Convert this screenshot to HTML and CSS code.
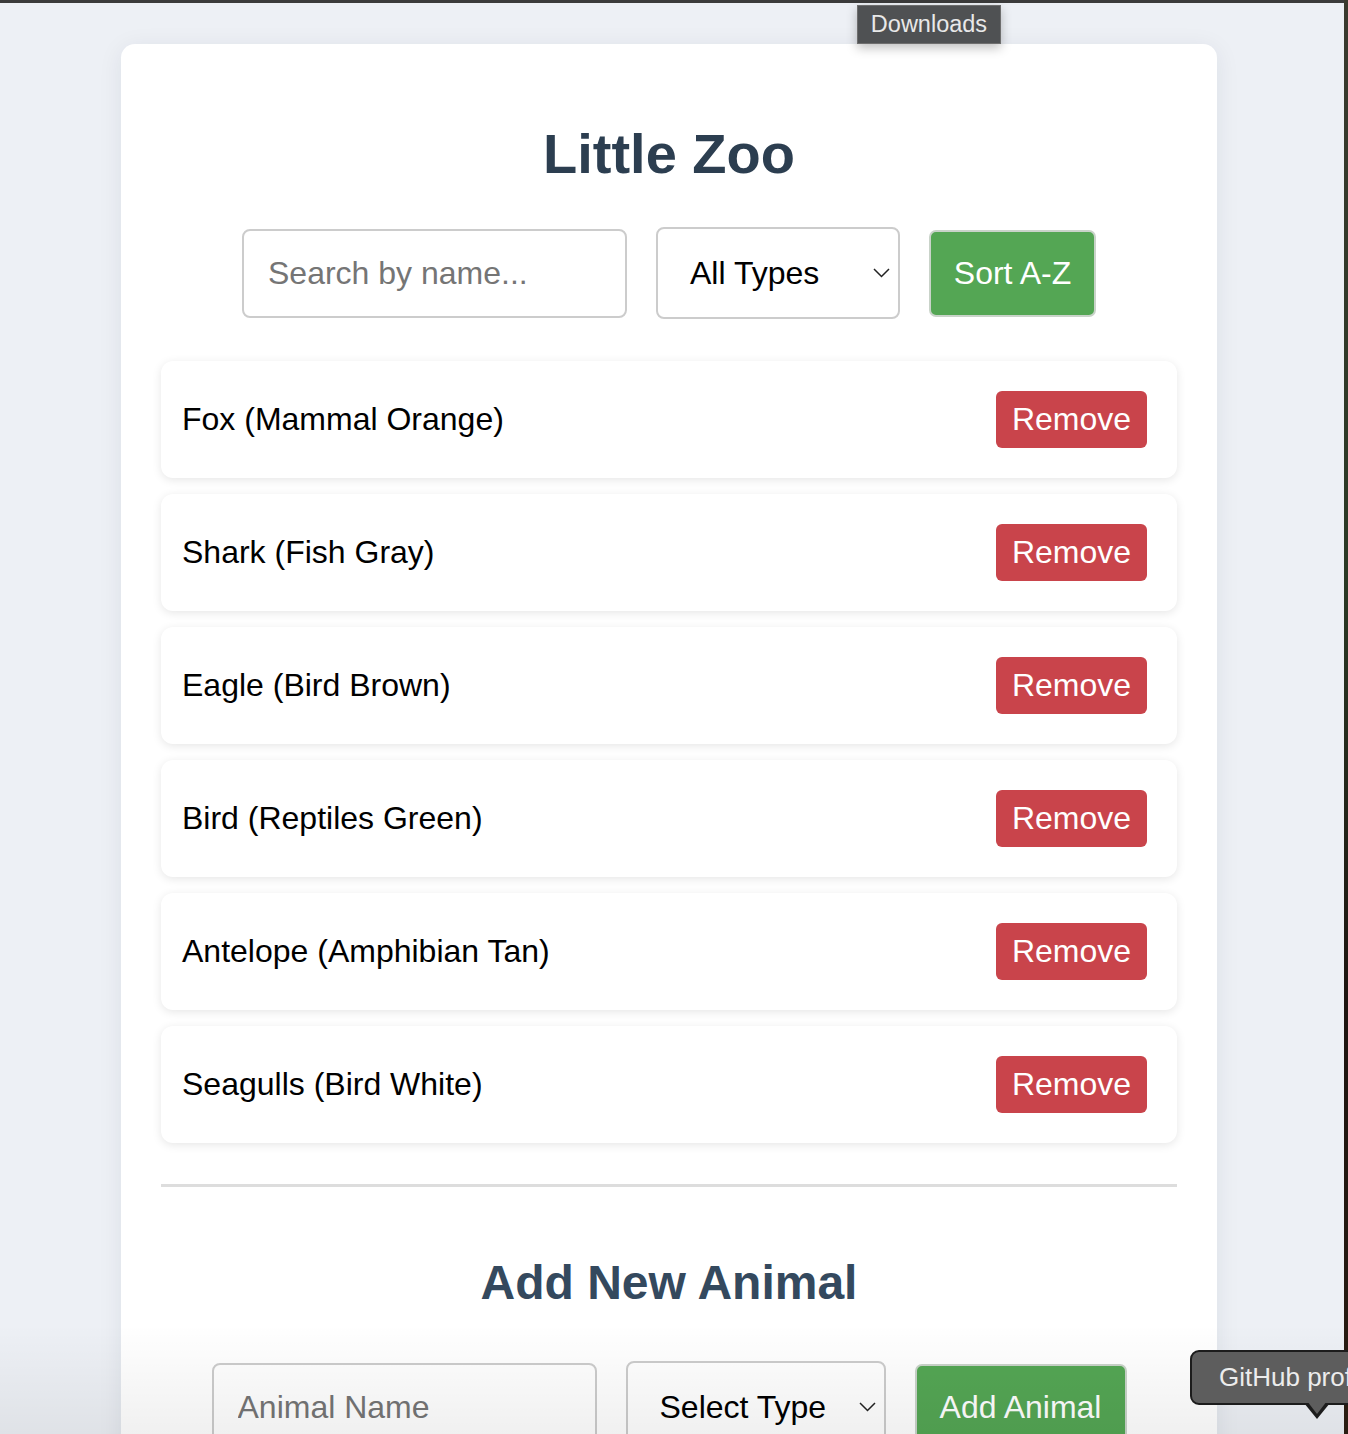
FILE: index.html
```html
<!DOCTYPE html>
<html lang="en">
<head>
<meta charset="utf-8">
<title>Little Zoo</title>
<link rel="stylesheet" href="styles.css">
</head>
<body>
<div class="topbar"></div>
<main class="page">
  <section class="card">
    <h1 class="title">Little Zoo</h1>
    <div class="controls">
      <input class="field field-search" type="text" placeholder="Search by name...">
      <div class="select select-types">
        <span>All Types</span>
        <svg class="chev" width="17" height="10" viewBox="0 0 17 10"><path d="M1 1l7.5 7.5 7.5-7.5" fill="none" stroke="#222" stroke-width="1.5"/></svg>
      </div>
      <button class="btn btn-green btn-sort">Sort A-Z</button>
    </div>
    <ul class="list">
      <li class="item"><span>Fox (Mammal Orange)</span><button class="btn btn-red">Remove</button></li>
      <li class="item"><span>Shark (Fish Gray)</span><button class="btn btn-red">Remove</button></li>
      <li class="item"><span>Eagle (Bird Brown)</span><button class="btn btn-red">Remove</button></li>
      <li class="item"><span>Bird (Reptiles Green)</span><button class="btn btn-red">Remove</button></li>
      <li class="item"><span>Antelope (Amphibian Tan)</span><button class="btn btn-red">Remove</button></li>
      <li class="item"><span>Seagulls (Bird White)</span><button class="btn btn-red">Remove</button></li>
    </ul>
    <hr class="divider">
    <h2 class="subtitle">Add New Animal</h2>
    <div class="controls controls-add">
      <input class="field field-name" type="text" placeholder="Animal Name">
      <div class="select select-add">
        <span>Select Type</span>
        <svg class="chev" width="17" height="10" viewBox="0 0 17 10"><path d="M1 1l7.5 7.5 7.5-7.5" fill="none" stroke="#222" stroke-width="1.5"/></svg>
      </div>
      <button class="btn btn-green btn-add">Add Animal</button>
    </div>
  </section>
</main>
<div class="tip tip-downloads">Downloads</div>
<div class="edge"></div>
<div class="fade"></div>
<div class="tip tip-github">GitHub profile<span class="tip-arrow"></span></div>
</body>
</html>
```

FILE: styles.css
```css
html, body {
  margin: 0;
  padding: 0;
  height: 1434px;
  overflow: hidden;
}
body {
  background: #edf0f5;
  font-family: "Liberation Sans", Arial, sans-serif;
  position: relative;
}
.topbar {
  height: 3px;
  background: #3b3b3b;
}
.page {
  padding: 41px 0 0 121px;
}
.card {
  width: 1096px;
  box-sizing: border-box;
  background: #fff;
  border-radius: 14px;
  padding: 40px 40px 80px;
  box-shadow: 0 4px 24px rgba(30, 40, 60, 0.08);
}
.title {
  margin: 37px 0 41px;
  text-align: center;
  font-size: 56px;
  font-weight: 700;
  color: #2c3e50;
}
.controls {
  display: flex;
  justify-content: center;
  align-items: center;
  gap: 29px;
}
.field {
  box-sizing: border-box;
  width: 385px;
  height: 89px;
  border: 2px solid #cccccc;
  border-radius: 8px;
  padding: 0 24px;
  font-family: inherit;
  font-size: 32px;
  color: #111;
  background: #fff;
  outline: none;
}
.field-search { padding-left: 24px; }
.field::placeholder { color: #757575; }
.select {
  box-sizing: border-box;
  height: 92px;
  border: 2px solid #cccccc;
  border-radius: 8px;
  padding: 0 8px 0 32px;
  display: flex;
  align-items: center;
  justify-content: space-between;
  font-size: 32px;
  color: #000;
  background: #fff;
}
.select-types { width: 244px; }
.select-add { width: 260px; }
.chev { display: block; }
.btn {
  font-family: inherit;
  font-size: 32px;
  color: #fff;
  cursor: pointer;
  box-sizing: border-box;
}
.btn-green {
  background: #54a654;
  border: 2px solid #c9d3c9;
  border-radius: 7px;
  height: 87px;
  padding: 0;
}
.btn-sort { width: 167px; }
.btn-add { width: 212px; }
.list {
  list-style: none;
  margin: 42px 0 0;
  padding: 0;
  display: flex;
  flex-direction: column;
  gap: 16px;
}
.item {
  height: 117px;
  box-sizing: border-box;
  display: flex;
  align-items: center;
  justify-content: space-between;
  padding: 0 30px 0 21px;
  background: #fff;
  border-radius: 12px;
  box-shadow: 0 2px 10px rgba(0, 0, 0, 0.1);
  font-size: 32px;
  color: #000;
}
.btn-red {
  background: #c9444b;
  border: none;
  border-radius: 6px;
  width: 151px;
  height: 57px;
  padding: 0;
}
.divider {
  margin: 41px 0 0;
  border: none;
  height: 3px;
  background: #dddddd;
}
.subtitle {
  margin: 68px 0 51px;
  text-align: center;
  font-size: 48px;
  font-weight: 700;
  color: #34495e;
}
.tip {
  position: absolute;
  z-index: 5;
  box-sizing: border-box;
  white-space: nowrap;
}
.tip-downloads {
  left: 857px;
  top: 5px;
  width: 144px;
  height: 39px;
  background: #4f5153;
  border: 1px solid #6e6e6e;
  color: #e8e8e8;
  font-family: "Liberation Sans", Arial, sans-serif;
  font-size: 23.5px;
  display: flex;
  align-items: center;
  justify-content: center;
  box-shadow: 0 4px 10px rgba(0, 0, 0, 0.25);
}
.edge {
  position: absolute;
  z-index: 4;
  right: 0;
  top: 0;
  width: 4px;
  height: 1434px;
  background: linear-gradient(#3a3a2e, #2b3a25 40%, #1e1510 70%, #2a1d12);
}
.fade {
  position: absolute;
  z-index: 3;
  left: 0;
  right: 0;
  bottom: 0;
  height: 110px;
  background: linear-gradient(rgba(0, 0, 0, 0), rgba(0, 0, 0, 0.06));
  pointer-events: none;
}
.tip-github {
  left: 1190px;
  top: 1350px;
  height: 55px;
  padding: 0 20px 0 27px;
  background: #5d5d5d;
  border: 2px solid #1c1c1c;
  border-radius: 9px;
  color: #ececec;
  font-size: 26px;
  display: flex;
  align-items: center;
}
.tip-arrow {
  position: absolute;
  left: 112px;
  top: 51px;
  width: 0;
  height: 0;
  border-left: 13px solid transparent;
  border-right: 13px solid transparent;
  border-top: 16px solid #1c1c1c;
}
.tip-arrow::after {
  content: "";
  position: absolute;
  left: -10px;
  top: -18px;
  border-left: 10px solid transparent;
  border-right: 10px solid transparent;
  border-top: 13px solid #5d5d5d;
}
```
